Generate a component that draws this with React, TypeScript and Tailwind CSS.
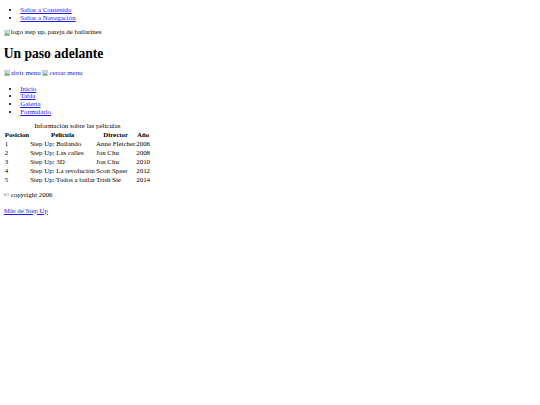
import React from "react";

const linkClass = "text-[#1a1aee] underline";

const movies = [
  { pos: "1", title: "Step Up: Bailando", director: "Anne Fletcher", year: "2006" },
  { pos: "2", title: "Step Up: Las calles", director: "Jon Chu", year: "2008" },
  { pos: "3", title: "Step Up: 3D", director: "Jon Chu", year: "2010" },
  { pos: "4", title: "Step Up: La revolución", director: "Scott Speer", year: "2012" },
  { pos: "5", title: "Step Up: Todos a bailar", director: "Trish Sie", year: "2014" },
];

function BrokenImage({ alt }: { alt: string }) {
  return (
    <span className="inline-flex items-center">
      <svg viewBox="0 0 16 16" className="mr-[1px] h-[6px] w-[6px]" aria-hidden="true">
        <rect x="0.5" y="0.5" width="15" height="15" fill="#e8eef5" stroke="#9aa3ad" />
        <rect x="2" y="2" width="12" height="8" fill="#bcd3ea" />
        <path d="M2 14 L6 8 L9 11 L11 9 L14 13 L14 14 Z" fill="#5f9e4a" />
      </svg>
      {alt}
    </span>
  );
}

export default function App() {
  return (
    <div className="min-h-[405px] bg-white px-[3.7px] pt-[6px] font-['Liberation_Serif',serif] text-[6.9px] leading-[8px] text-black">
      <ul className="list-disc pl-[16.5px] leading-[8.2px]">
        <li>
          <a href="#contenido" className={linkClass}>Saltar a Contenido</a>
        </li>
        <li>
          <a href="#navegacion" className={linkClass}>Saltar a Navegación</a>
        </li>
      </ul>

      <div className="mt-[6px] leading-[8.4px]">
        <BrokenImage alt="logo step up, pareja de bailarines" />
      </div>

      <h1 className="mt-[7px] text-[13.6px] font-bold leading-[17px]">Un paso adelante</h1>

      <div className="mt-[7px] leading-[8.4px]">
        <a href="#abrir" className={linkClass}>
          <BrokenImage alt="abrir menu" />
        </a>{" "}
        <a href="#cerrar" className={linkClass}>
          <BrokenImage alt="cerrar menu" />
        </a>
      </div>

      <ul className="mt-[6px] list-disc pl-[16.5px] leading-[7.7px]">
        <li><a href="#inicio" className={linkClass}>Inicio</a></li>
        <li><a href="#tabla" className={linkClass}>Tabla</a></li>
        <li><a href="#galeria" className={linkClass}>Galeria</a></li>
        <li><a href="#formulario" className={linkClass}>Formulario</a></li>
      </ul>

      <table className="mt-[7px] border-separate border-spacing-[1.2px] leading-[8px]">
        <caption className="leading-[8px]">Información sobre las peliculas</caption>
        <thead>
          <tr>
            <th className="p-0 font-bold">Posicion</th>
            <th className="p-0 font-bold">Pelicula</th>
            <th className="p-0 font-bold">Director</th>
            <th className="p-0 font-bold">Año</th>
          </tr>
        </thead>
        <tbody>
          {movies.map((m) => (
            <tr key={m.pos}>
              <td className="p-0">{m.pos}</td>
              <td className="p-0">{m.title}</td>
              <td className="p-0">{m.director}</td>
              <td className="p-0">{m.year}</td>
            </tr>
          ))}
        </tbody>
      </table>

      <footer>
        <p className="mt-[6px] leading-[8.4px]">© copyright 2006</p>
        <p className="mt-[7px] leading-[8.4px]">
          <a href="#mas" className={linkClass}>Más de Step Up</a>
        </p>
      </footer>
    </div>
  );
}
